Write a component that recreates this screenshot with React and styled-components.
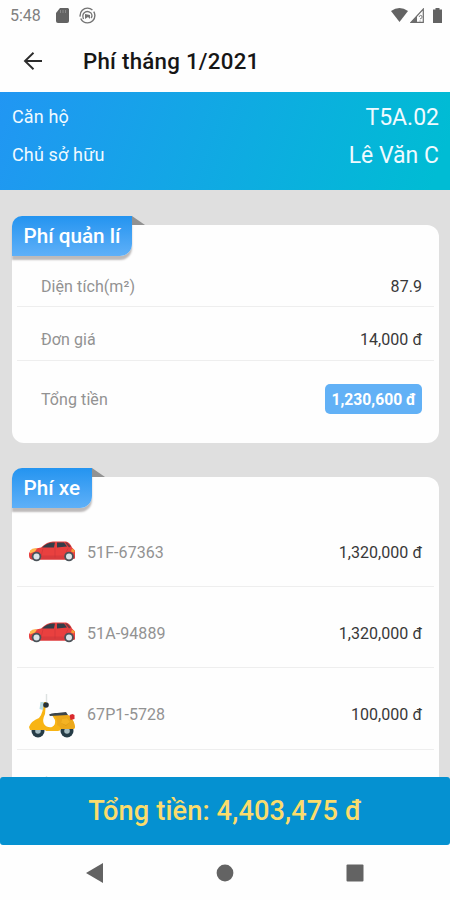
import React from "react";
import styled, { createGlobalStyle } from "styled-components";

const GlobalStyle = createGlobalStyle`
  * { box-sizing: border-box; }
  body { margin: 0; background: #fff; font-family: Roboto, "Noto Sans", sans-serif; }
`;

const Screen = styled.div`
  width: 450px;
  height: 900px;
  display: flex;
  flex-direction: column;
  overflow: hidden;
  background: #fefefe;
`;

const StatusBar = styled.div`
  height: 30px;
  flex: none;
  display: flex;
  align-items: center;
  justify-content: space-between;
  padding: 0 8px 0 10px;
  font-size: 16px;
  color: #808080;
`;

const StatusGroup = styled.div`
  display: flex;
  align-items: center;
`;

const StatusIcon = styled.svg`
  display: block;
  margin-left: ${(p) => p.$gap || 0}px;
`;

const AppBar = styled.header`
  height: 62px;
  flex: none;
  display: flex;
  align-items: center;
  padding: 0 0 1px 23px;
`;

const Title = styled.h1`
  margin: 1px 0 0 40px;
  font-size: 22.3px;
  line-height: 28px;
  font-weight: 500;
  letter-spacing: 0.25px;
  color: #161616;
`;

const Summary = styled.section`
  height: 98px;
  flex: none;
  padding: 6px 11px 0 12px;
  background: linear-gradient(110deg, #2196f3 0%, #00bcd4 96%);
  color: #f0faff;
`;

const SummaryRow = styled.div`
  height: 38px;
  display: flex;
  align-items: center;
  justify-content: space-between;
`;

const SummaryLabel = styled.span`
  padding-bottom: 2px;
  font-size: 18px;
  letter-spacing: 0.15px;
`;

const SummaryValue = styled.span`
  padding-top: 1px;
  font-size: 23px;
`;

const Content = styled.main`
  flex: 1;
  min-height: 0;
  overflow: hidden;
  padding: 35px 11px 0 12px;
  display: flex;
  flex-direction: column;
  gap: 34px;
  background: #dfdfdf;
`;

const Card = styled.section`
  position: relative;
  flex: none;
  height: ${(p) => p.$height}px;
  padding: ${(p) => p.$top}px 5px 0;
  border-radius: 12px;
  background: #fefefe;
`;

const Ribbon = styled.div`
  position: absolute;
  left: 0;
  top: -9px;
  width: ${(p) => p.$width}px;
  height: 40px;
  padding-left: 11.5px;
  border-radius: 10px 0 12px 0;
  background: linear-gradient(#2494f0, #5fb0f8);
  box-shadow: 0 4px 2px #bdbaba;
  color: #fff;
  font-size: 20.7px;
  line-height: 41px;
  font-weight: 500;
  white-space: nowrap;

  &::after {
    content: "";
    position: absolute;
    left: 100%;
    top: 0;
    width: 13px;
    height: 9px;
    background: #929292;
    clip-path: polygon(0 0, 100% 100%, 0 100%);
  }
`;

const Row = styled.div`
  height: ${(p) => p.$height}px;
  display: flex;
  align-items: center;
  padding: ${(p) => p.$drop || 0}px 12px 0 ${(p) => p.$inset}px;
  border-bottom: ${(p) => (p.$last ? "0" : "1px solid #eeeeee")};
  font-size: 16px;
`;

const Label = styled.span`
  flex: 1;
  color: #929292;
  letter-spacing: 0.08px;
`;

const Amount = styled.span`
  color: #383838;
  letter-spacing: 0.05px;
`;

const Badge = styled.strong`
  height: 30px;
  padding: 0 6px;
  border-radius: 5px;
  background: #62b1f6;
  color: #fff;
  font-size: 15.7px;
  font-weight: 700;
  line-height: 31px;
`;

const VehicleIcon = styled.svg`
  display: block;
  width: 48px;
  height: 48px;
  margin-right: 11px;
  flex: none;
`;

const BottomWrap = styled.div`
  flex: none;
  background: linear-gradient(#dfdfdf 20px, #fefefe 20px);
`;

const TotalBar = styled.footer`
  height: 68px;
  display: flex;
  align-items: center;
  justify-content: center;
  border-radius: 3px;
  background: #0591d1;
  color: #fbdc6c;
  font-size: 27.2px;
  font-weight: 500;
  letter-spacing: 0.12px;
`;

const NavBar = styled.nav`
  height: 55px;
  flex: none;
  display: grid;
  grid-template-columns: 130px 130px 130px;
  justify-content: center;
  justify-items: center;
  align-items: center;
  background: #fefefe;
`;

const NavIcon = styled.svg`
  display: block;
  fill: #636363;
`;

function Car() {
  return (
    <VehicleIcon viewBox="0 -2.5 48 48">
      <path d="M1 23q1-4 7-5l5-1q6-6 12-6h13q4 1 6 6l3 3v7l-4 2H5q-4 0-4-4z" fill="#e9403f" />
      <path d="M2 25h45v3l-4 1H5q-4 0-3-4z" fill="#d93b3d" />
      <path d="M14 17q5-5 11-5h2l-1 5zm15-5h7l3 4-10 1z" fill="#353d48" />
      <path d="m39 12 4 4-2 1-4-5z" fill="#713b43" />
      <path d="M2 20q3-3 7-2l-2 3-5 2z" fill="#ffb84c" />
      <path d="m44 18 3 2-1 2-3-1z" fill="#f59b38" />
      <path d="M27 17v10M15 18l-2 8M40 18l-2 4" fill="none" stroke="#c93439" strokeWidth=".6" />
      <circle cx="8.5" cy="26" r="4.8" fill="#4b5359" />
      <circle cx="8.5" cy="26" r="3" fill="#dce5e9" />
      <circle cx="41" cy="26" r="4.8" fill="#4b5359" />
      <circle cx="41" cy="26" r="3" fill="#dce5e9" />
    </VehicleIcon>
  );
}

function Scooter() {
  return (
    <VehicleIcon viewBox="0 0 48 48">
      <path d="M18.5 3v8" stroke="#dde2e1" strokeWidth="1.4" />
      <circle cx="10" cy="40" r="6.5" fill="#263c47" />
      <circle cx="10" cy="40" r="2.8" fill="#a5bbc1" />
      <circle cx="39" cy="40" r="6.5" fill="#263c47" />
      <circle cx="39" cy="40" r="2.8" fill="#a5bbc1" />
      <path d="M14 11h4l-1 12q-3 6-1 10 3 4 8 3 4-2 3-7l-3-5h16q6 4 7 12l-1 2H33q-1 2-3 2H18l-1-1H2l-1-3q2-6 10-9 5-6 4-16z" fill="#f8b414" />
      <path d="M26 24h14q6 4 7 12l-1 2H33q-1-3-4-4 1-5-3-10z" fill="#eca81a" />
      <path d="m34 28 5-1 3 4-4 4-5-3z" fill="#d99b18" />
      <path d="m34 28 5-1 3 4-4 3-5-2z" fill="#f4b323" />
      <path d="m12.5 11-1 7 3.5 1 1-8z" fill="#b9dce3" />
      <circle cx="18" cy="14" r="2.8" fill="#263238" />
      <path d="M21 23.5q3-2 8-1.5l9-1 2 3-18 1z" fill="#3c454b" />
      <path d="m41.5 24 3-1 2 1v4l-4 1z" fill="#d9292e" />
    </VehicleIcon>
  );
}

const vehicles = [
  { plate: "51F-67363", amount: "1,320,000 đ", icon: Car, height: 76, drop: 7 },
  { plate: "51A-94889", amount: "1,320,000 đ", icon: Car, height: 81, drop: 12 },
  { plate: "67P1-5728", amount: "100,000 đ", icon: Scooter, height: 82, drop: 12 },
];

export default function App() {
  return (
    <Screen>
      <GlobalStyle />
      <StatusBar>
        <StatusGroup>
          <span>5:48</span>
          <StatusIcon $gap={15} width="13" height="15" viewBox="0 0 13 15">
            <path d="M4 0h8l1 1v12q0 2-2 2H2q-2 0-2-2V5z" fill="#636363" />
            <path d="M4.5 2v3M7 2v3M9.5 2v3" stroke="#8a8a8a" />
          </StatusIcon>
          <StatusIcon $gap={10} width="17" height="17" viewBox="0 0 17 17" fill="none" stroke="#747474">
            <circle cx="8.5" cy="8.5" r="7.4" strokeWidth="1.4" strokeDasharray="20 2 18 2" />
            <path d="M4.5 12Q3 8 5 6q3-3 7 0 2 3 0 5" strokeWidth="1.3" />
            <path d="m6 7 5 1v4L9 10l-3 2z" fill="#747474" stroke="none" />
          </StatusIcon>
        </StatusGroup>
        <StatusGroup>
          <StatusIcon width="17" height="14" viewBox="0 0 17 14"><path d="M0 3q8.5-6 17 0L8.5 14z" fill="#636363" /></StatusIcon>
          <StatusIcon $gap={2} width="15" height="15" viewBox="0 0 15 15">
            <path d="M1 14.3 13.3 1v13.3z" fill="none" stroke="#6c6c6c" strokeWidth="1.2" />
            <path d="m1 14.5 6-6.5v6.5z" fill="#6c6c6c" />
            <path d="M9 9q1-3 3-1 1 2-2 3m0 1.5v1" fill="none" stroke="#808080" />
          </StatusIcon>
          <StatusIcon $gap={8} width="9" height="15" viewBox="0 0 9 15"><path d="M2.5 0h4v1.5H9V15H0V1.5h2.5z" fill="#636363" /></StatusIcon>
        </StatusGroup>
      </StatusBar>
      <AppBar>
        <svg width="20" height="20" viewBox="0 0 20 20" fill="none" stroke="#2c2c2c" strokeWidth="1.9">
          <path d="M19 10H2M10.5 1.7 2 10l8.5 8.3" />
        </svg>
        <Title>Phí tháng 1/2021</Title>
      </AppBar>
      <Summary>
        <SummaryRow><SummaryLabel>Căn hộ</SummaryLabel><SummaryValue>T5A.02</SummaryValue></SummaryRow>
        <SummaryRow><SummaryLabel>Chủ sở hữu</SummaryLabel><SummaryValue>Lê Văn C</SummaryValue></SummaryRow>
      </Summary>
      <Content>
        <Card $height={218} $top={40}>
          <Ribbon $width={120}>Phí quản lí</Ribbon>
          <Row $height={42} $drop={2} $inset={24}><Label>Diện tích(m²)</Label><Amount>87.9</Amount></Row>
          <Row $height={54} $drop={12} $inset={24}><Label>Đơn giá</Label><Amount>14,000 đ</Amount></Row>
          <Row $height={76} $inset={24} $last><Label>Tổng tiền</Label><Badge>1,230,600 đ</Badge></Row>
        </Card>
        <Card $height={400} $top={34}>
          <Ribbon $width={80}>Phí xe</Ribbon>
          {vehicles.map(({ plate, amount, icon: Icon, height, drop }) => (
            <Row key={plate} $height={height} $drop={drop} $inset={11}>
              <Icon />
              <Label>{plate}</Label>
              <Amount>{amount}</Amount>
            </Row>
          ))}
          <Row $height={81} $drop={12} $inset={11} $last><Scooter /></Row>
        </Card>
      </Content>
      <BottomWrap><TotalBar>Tổng tiền: 4,403,475 đ</TotalBar></BottomWrap>
      <NavBar>
        <NavIcon width="18" height="20" viewBox="0 0 18 20"><path d="M17 0v20L0 10z" /></NavIcon>
        <NavIcon width="18" height="18" viewBox="0 0 18 18"><circle cx="9" cy="9" r="8.4" /></NavIcon>
        <NavIcon width="18" height="18" viewBox="0 0 18 18"><rect x=".5" y=".5" width="17" height="17" rx="1" /></NavIcon>
      </NavBar>
    </Screen>
  );
}
